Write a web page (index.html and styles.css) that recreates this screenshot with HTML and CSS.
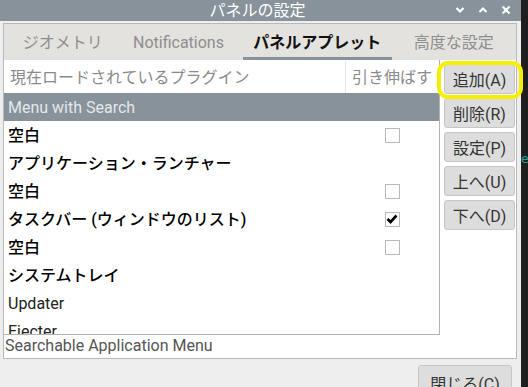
FILE: index.html
```html
<!DOCTYPE html>
<html lang="ja">
<head>
<meta charset="utf-8">
<link rel="stylesheet" href="styles.css">
</head>
<body>
<div class="screen">
  <div class="window">
    <div class="titlebar">
      <span class="title">パネルの設定</span>
      <div class="wm">
        <svg width="10" height="8" viewBox="0 0 10 8"><path d="M1.5 2 L5 5.5 L8.5 2" fill="none" stroke="#fff" stroke-width="2.2"/></svg>
        <svg width="10" height="8" viewBox="0 0 10 8"><path d="M1.5 6 L5 2.5 L8.5 6" fill="none" stroke="#fff" stroke-width="2.2"/></svg>
        <svg width="10" height="10" viewBox="0 0 10 10"><path d="M1.5 1.5 L8.5 8.5 M8.5 1.5 L1.5 8.5" fill="none" stroke="#fff" stroke-width="2.2"/></svg>
      </div>
    </div>
    <div class="body">
      <div class="notebook">
        <div class="tabs">
          <div class="tab t1">ジオメトリ</div>
          <div class="tab t2">Notifications</div>
          <div class="tab t3 active">パネルアプレット</div>
          <div class="tab t4">高度な設定</div>
        </div>
        <div class="page">
          <div class="content">
            <div class="list">
              <div class="header">
                <div class="c1">現在ロードされているプラグイン</div>
                <div class="c2">引き伸ばす</div>
              </div>
              <div class="rows">
                <div class="row sel"><div class="c1">Menu with Search</div><div class="c2"></div></div>
                <div class="row"><div class="c1">空白</div><div class="c2"><span class="cb"></span></div></div>
                <div class="row"><div class="c1">アプリケーション・ランチャー</div><div class="c2"></div></div>
                <div class="row"><div class="c1">空白</div><div class="c2"><span class="cb"></span></div></div>
                <div class="row"><div class="c1">タスクバー (ウィンドウのリスト)</div><div class="c2"><span class="cb on"><svg width="12" height="10" viewBox="0 0 12 10"><path d="M1.5 5 L4.5 8 L10.5 1.5" fill="none" stroke="#000" stroke-width="2.6"/></svg></span></div></div>
                <div class="row"><div class="c1">空白</div><div class="c2"><span class="cb"></span></div></div>
                <div class="row"><div class="c1">システムトレイ</div><div class="c2"></div></div>
                <div class="row"><div class="c1 en">Updater</div><div class="c2"></div></div>
                <div class="row"><div class="c1 en">Ejecter</div><div class="c2"></div></div>
              </div>
            </div>
            <div class="buttons">
              <button class="btn">追加(A)</button>
              <button class="btn">削除(R)</button>
              <button class="btn">設定(P)</button>
              <button class="btn">上へ(U)</button>
              <button class="btn">下へ(D)</button>
              <div class="highlight"></div>
            </div>
          </div>
          <div class="desc">Searchable Application Menu</div>
        </div>
      </div>
      <div class="footer">
        <button class="btn close">閉じる(C)</button>
      </div>
    </div>
  </div>
  <div class="strip"><span class="term">eg</span></div>
</div>
</body>
</html>
```

FILE: styles.css
```css
* { box-sizing: border-box; }
html, body { margin: 0; padding: 0; }
body {
  width: 528px;
  height: 387px;
  overflow: hidden;
  background: #1e1e1e;
  font-family: Roboto, "Noto Sans CJK JP", sans-serif;
  font-size: 16px;
}
.screen { display: flex; width: 528px; height: 387px; }
.window {
  width: 521px;
  height: 387px;
  display: flex;
  flex-direction: column;
  background: #eeeeee;
}
.titlebar {
  height: 21px;
  background: #87929a;
  position: relative;
  display: flex;
  align-items: center;
  justify-content: center;
  color: #fff;
}
.title { font-size: 16px; line-height: 21px; margin-left: -6px; }
.wm {
  position: absolute;
  right: 10px;
  top: 5px;
  display: flex;
  gap: 13px;
  align-items: center;
}
.body {
  flex: 1;
  display: flex;
  flex-direction: column;
  padding: 2px 4px 0 3px;
}
.notebook {
  height: 336px;
  border: 1px solid #b9b9b9;
  display: flex;
  flex-direction: column;
  background: #fff;
}
.tabs {
  height: 36px;
  background: #e4e2df;
  display: flex;
}
.tab {
  text-align: center;
  color: #8e8e8e;
  padding-top: 4px;
  line-height: 30px;
  font-size: 16px;
  border-bottom: 3px solid transparent;
}
.t1 { width: 118px; }
.t2 { width: 115px; margin-right: 7px; }
.t3 { width: 150px; }
.t4 { width: 125px; }
.tab.active {
  color: #111;
  font-weight: bold;
  border-bottom-color: #87929a;
}
.page {
  flex: 1;
  display: flex;
  flex-direction: column;
}
.content {
  display: flex;
  height: 275px;
}
.list {
  width: 436px;
  height: 275px;
  border-right: 1px solid #b3b3b3;
  border-bottom: 1px solid #b3b3b3;
  overflow: hidden;
  padding-top: 1px;
}
.header {
  display: flex;
  height: 32px;
  color: #8a8a8a;
  line-height: 32px;
}
.header .c1 { width: 342px; padding: 2px 0 0 6px; border-right: 1px solid #e6e6e6; line-height: 30px; }
.header .c2 { flex: 1; padding: 2px 0 0 6px; line-height: 30px; }
.row {
  display: flex;
  height: 28px;
  color: #000;
}
.row .c1 { width: 342px; padding: 1px 0 0 4px; line-height: 27px; white-space: nowrap; font-weight: 500; }
.row .c1.en { color: #222; font-weight: normal; }
.row .c2 { flex: 1; display: flex; align-items: center; justify-content: center; padding-right: 1px; }
.row.sel { background: #87929a; color: #e4e8ea; }
.row.sel .c1 { font-weight: normal; }
.cb {
  width: 15px;
  height: 15px;
  border: 1px solid #b8b8b8;
  background: #fff;
  display: flex;
  align-items: center;
  justify-content: center;
}
.buttons {
  position: relative;
  display: flex;
  flex-direction: column;
  gap: 4px;
  padding: 4px 0 0 4px;
}
.btn {
  width: 71px;
  height: 30px;
  background: #dddddd;
  border: 1px solid #c6c6c6;
  border-radius: 3px;
  color: #333;
  font-family: Roboto, "Noto Sans CJK JP", sans-serif;
  font-size: 16px;
  padding: 0;
  margin: 0;
}
.highlight {
  position: absolute;
  z-index: 5;
  left: -3px;
  top: 1px;
  width: 86px;
  height: 38px;
  border: 4px solid #f7ef00;
  border-radius: 11px;
}
.desc {
  color: #555;
  padding-left: 1px;
  line-height: 22px;
  font-size: 16px;
}
.footer {
  display: flex;
  justify-content: flex-end;
  padding: 6px 5px 0 0;
}
.btn.close {
  width: 94px;
  height: 32px;
  line-height: 30px;
  padding-top: 4px;
}
.strip {
  width: 7px;
  height: 387px;
  background: #1e1e1e;
  overflow: hidden;
  position: relative;
}
.term {
  position: absolute;
  left: 0;
  top: 151px;
  color: #26a69a;
  font-family: "DejaVu Sans Mono", monospace;
  font-size: 13px;
}
```
